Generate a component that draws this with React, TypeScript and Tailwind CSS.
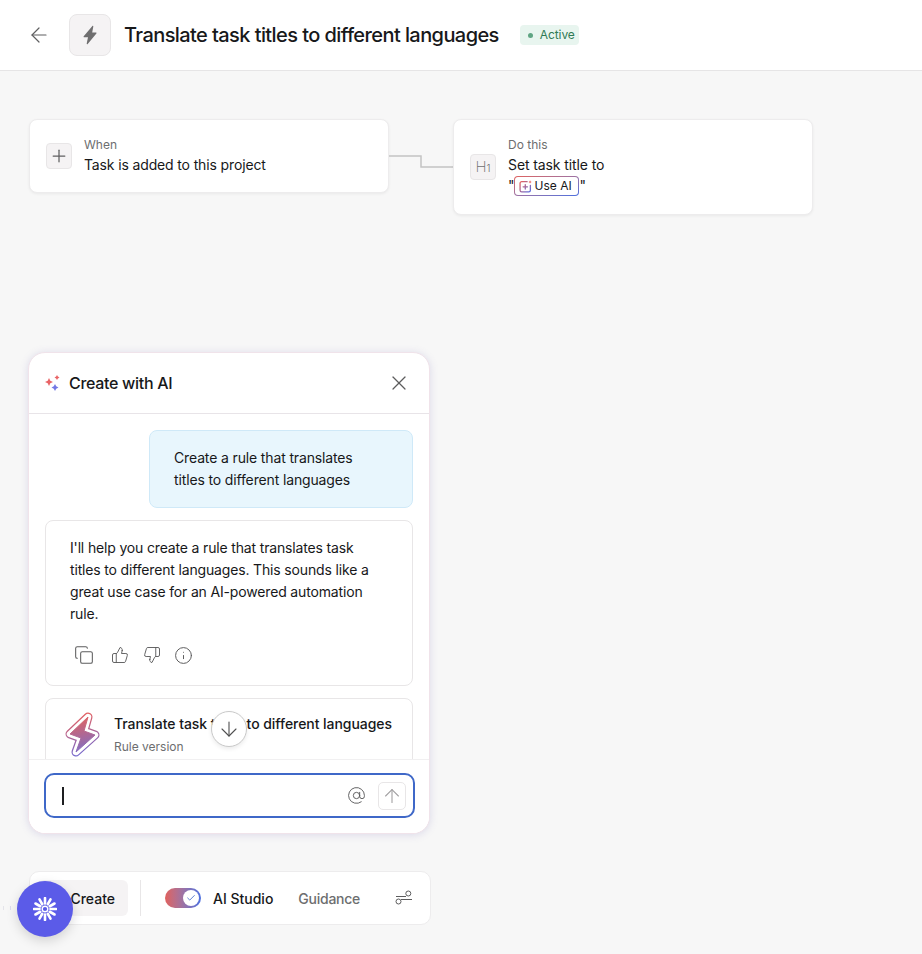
import { ArrowLeft, Plus, X, Copy, ThumbsUp, ThumbsDown, Info, ArrowDown, ArrowUp, AtSign, Check } from "lucide-react";

function Bolt() {
  return (
    <svg width="18" height="20" viewBox="0 0 18 20" fill="#6f6e6f">
      <path d="M11.400 1 2.700 11.200c-.3.5 0 1 .5 1h3.800L5.700 18.400c-.1.7.6 1 1 .5L15.400 8.500c.3-.4 0-1-.5-1H11.200l1.100-6.100c.1-.7-.5-.9-.9-.4Z" />
    </svg>
  );
}

function Sparkles() {
  return (
    <svg width="16" height="16" viewBox="0 0 16 16">
      <path d="M4 3 5.300 5.700 8 7 5.300 8.300 4 11 2.700 8.300 0 7 2.700 5.700Z" fill="#e96466" />
      <path d="M12 0 12.900 1.600 14.500 2.500 12.900 3.400 12 5 11.100 3.400 9.500 2.500 11.100 1.600Z" fill="#e96466" />
      <path d="M10 9 11.200 11.300 13.500 12.500 11.200 13.700 10 16 8.800 13.700 6.500 12.500 8.800 11.300Z" fill="#7478e4" />
    </svg>
  );
}

const boltPath = "M33 17 15 34 26 38 21 52 40 35 29 31Z";

function BigBolt() {
  return (
    <svg width="59" height="65" viewBox="0 0 59 65" className="-mt-[13px] shrink-0">
      <defs>
        <linearGradient id="boltGrad" gradientUnits="userSpaceOnUse" x1="20" y1="13" x2="32" y2="57">
          <stop offset="0" stopColor="#ec5f58" />
          <stop offset="1" stopColor="#6a6ad8" />
        </linearGradient>
        <linearGradient id="boltFill" gradientUnits="userSpaceOnUse" x1="22" y1="17" x2="32" y2="52">
          <stop offset="0" stopColor="#e2625f" />
          <stop offset="1" stopColor="#7d6ec8" />
        </linearGradient>
      </defs>
      <path d={boltPath} fill="none" stroke="url(#boltGrad)" strokeWidth="9" strokeLinejoin="round" />
      <path d={boltPath} fill="none" stroke="#fff" strokeWidth="6.500" strokeLinejoin="round" />
      <path d={boltPath} fill="url(#boltFill)" stroke="url(#boltFill)" strokeWidth="1" strokeLinejoin="round" />
    </svg>
  );
}

function Burst() {
  const rays = [0, 30, 60, 90, 120, 150, 180, 210, 240, 270, 300, 330];
  return (
    <svg width="24" height="24" viewBox="0 0 24 24">
      <circle cx="12" cy="12" r="2.800" fill="none" stroke="#fff" strokeWidth="1.400" />
      {rays.map((r) => (
        <line key={r} x1="12" y1="6.500" x2="12" y2="1" stroke="#fff" strokeWidth="2.600" strokeLinecap="round" transform={`rotate(${r} 12 12)`} />
      ))}
    </svg>
  );
}

function UseAiIcon() {
  return (
    <svg width="13" height="13" viewBox="0 0 12 12" fill="none">
      <defs>
        <linearGradient id="uaGrad" x1="0" y1="0" x2="1" y2="1">
          <stop offset="0" stopColor="#e8605a" />
          <stop offset="1" stopColor="#5a6ee0" />
        </linearGradient>
      </defs>
      <path d="M7.500 1.500H2.500a1.500 1.500 0 0 0-1.500 1.500v6.500A1.500 1.500 0 0 0 2.500 11H9a1.500 1.500 0 0 0 1.500-1.500V5M3.800 6.300h4M5.800 4.300v4" stroke="url(#uaGrad)" strokeWidth="1.200" strokeLinecap="round" />
      <path d="M10.200 0.300 10.700 1.300 11.700 1.800 10.700 2.300 10.200 3.300 9.700 2.300 8.700 1.800 9.700 1.300Z" fill="#e8605a" />
    </svg>
  );
}

export default function App() {
  return (
    <div className="relative min-h-[954px] overflow-hidden bg-[#f7f7f7] font-['Inter',sans-serif] text-[#17181a]">
      <header className="flex h-[71px] items-center border-b border-[#e6e5e6] bg-white pl-[27px]">
        <ArrowLeft size={24} strokeWidth={1.2} className="text-[#5f5f60]" />
        <div className="ml-[18px] flex h-[42px] w-[42px] items-center justify-center rounded-[8px] border border-[#e8e6e7] bg-[#f5f3f4]">
          <Bolt />
        </div>
        <h1 className="ml-[13px] text-[20px] font-medium tracking-[-0.58px]">Translate task titles to different languages</h1>
        <span className="ml-[21px] flex h-[20px] items-center gap-[7px] rounded-[4px] bg-[#e8f5ef] pl-[8px] pr-[4px] text-[12px] tracking-[-0.1px] text-[#2f7a55]">
          <span className="h-[5px] w-[5px] rounded-full bg-[#5fa583]" />
          Active
        </span>
      </header>

      <main className="pl-[29px] pt-[48px]">
        <div className="flex items-start">
          <div className="flex h-[74px] w-[360px] items-center rounded-[8px] border border-[#edeced] bg-white pl-[16px] shadow-[0_1px_3px_rgba(0,0,0,0.06)]">
            <div className="flex h-[26px] w-[26px] items-center justify-center rounded-[4px] border border-[#e8e6e7] bg-[#f5f3f4]">
              <Plus size={20} strokeWidth={1.5} className="text-[#5f5f60]" />
            </div>
            <div className="ml-[12px]">
              <div className="text-[12px] leading-[16px] text-[#6d6e6f]">When</div>
              <div className="mt-[2px] text-[14px] leading-[20px] tracking-[-0.14px]">Task is added to this project</div>
            </div>
          </div>
          <svg width="64" height="60" viewBox="0 0 64 60" fill="none" className="shrink-0">
            <path d="M0 37H32V48H64" stroke="#c4c4c4" strokeWidth="1.500" />
          </svg>
          <div className="flex h-[96px] w-[360px] items-center rounded-[8px] border border-[#edeced] bg-white pl-[16px] shadow-[0_1px_3px_rgba(0,0,0,0.06)]">
            <div className="flex h-[26px] w-[26px] items-center justify-center rounded-[4px] border border-[#e8e6e7] bg-[#f5f3f4] text-[#6d6e6f]">
              <span className="text-[15px] font-extralight">H</span>
              <span className="mt-[3px] text-[10px] font-light">1</span>
            </div>
            <div className="ml-[12px] pb-[1px]">
              <div className="text-[12px] leading-[16px] text-[#6d6e6f]">Do this</div>
              <div className="mt-[2px] text-[14px] leading-[20px] tracking-[-0.1px]">Set task title to</div>
              <div className="mt-[1px] flex items-center text-[14px] leading-[20px]">
                "
                <span className="-ml-[1px] mr-[1px] rounded-[4px] bg-gradient-to-br from-[#e0605c] to-[#4a6fe0] p-[1px]">
                  <span className="flex h-[18px] w-[63px] items-center gap-[3px] rounded-[3px] bg-white pl-[4px] text-[12px]">
                    <UseAiIcon />
                    Use AI
                  </span>
                </span>
                "
              </div>
            </div>
          </div>
        </div>

        <section className="-ml-[1px] mt-[137px] flex h-[482px] w-[402px] flex-col overflow-hidden rounded-[17px] border border-[#f0e3ea] bg-white shadow-[0_1px_8px_rgba(110,100,180,0.2)]">
          <div className="flex h-[61px] shrink-0 items-center justify-between border-b border-[#e8e4e8] pl-[16px] pr-[18px]">
            <div className="flex items-center gap-[8px]">
              <Sparkles />
              <span className="text-[16px] font-medium tracking-[-0.3px]">Create with AI</span>
            </div>
            <X size={24} strokeWidth={1.2} className="text-[#5c5c5d]" />
          </div>
          <div className="relative flex-1 overflow-hidden px-[16px] pt-[16px]">
            <div className="ml-auto h-[78px] w-[264px] rounded-[8px] border border-[#cfe9f8] bg-[#e8f6fd] pl-[24px] pt-[16px] text-[14px] leading-[22px] tracking-[-0.14px]">
              Create a rule that translates<br />titles to different languages
            </div>
            <div className="mt-[12px] h-[166px] w-[368px] rounded-[8px] border border-[#e8e6e7] pl-[24px] pr-[36px] pt-[16px] text-[14px] leading-[22px] tracking-[-0.16px]">
              I'll help you create a rule that translates task titles to different languages. This sounds like a great use case for an AI-powered automation rule.
              <div className="mt-[20px] flex items-center pl-[4px] text-[#5c5c5d]">
                <Copy size={20} strokeWidth={1.25} />
                <ThumbsUp size={18} strokeWidth={1.25} className="ml-[17px]" />
                <ThumbsDown size={18} strokeWidth={1.25} className="ml-[14px]" />
                <Info size={19} strokeWidth={1.25} className="ml-[13px]" />
              </div>
            </div>
            <div className="mt-[12px] flex h-[90px] w-[368px] rounded-[8px] border border-[#e8e6e7] pl-[9px] pt-[14px]">
              <BigBolt />
              <div>
                <div className="text-[14px] font-medium leading-[22px] tracking-[-0.05px]">Translate task titles to different languages</div>
                <div className="mt-[3px] text-[12px] leading-[18px] text-[#6d6e6f]">Rule version</div>
              </div>
            </div>
            <div className="absolute bottom-[12px] left-[182px] flex h-[36px] w-[36px] items-center justify-center rounded-full border border-[#c9c9c9] bg-white text-[#4f4f50] shadow-[0_2px_4px_rgba(0,0,0,0.08)]">
              <ArrowDown size={24} strokeWidth={1.1} />
            </div>
          </div>
          <div className="h-[74px] shrink-0 border-t border-[#f1f0f1] bg-white px-[15px] pt-[13px]">
            <div className="flex h-[45px] w-[371px] items-center rounded-[10px] border-2 border-[#3f68c8] pl-[16px] pr-[7px]">
              <span className="h-[18px] w-[1.500px] bg-[#1e1f21]" />
              <AtSign size={19} strokeWidth={1.2} className="ml-auto text-[#5c5c5d]" />
              <div className="ml-[12px] flex h-[28px] w-[28px] items-center justify-center rounded-[5px] border border-[#e8e6e7] text-[#a2a0a2]">
                <ArrowUp size={22} strokeWidth={1.2} />
              </div>
            </div>
          </div>
        </section>

        <div className="mt-[37px] flex h-[54px] w-[402px] items-center rounded-[10px] border border-[#edeced] bg-white pl-[8px]">
          <div className="flex h-[36px] w-[90px] items-center justify-end rounded-[6px] bg-[#f5f3f4] pr-[13px] text-[14px] font-medium">Create</div>
          <div className="ml-[12px] h-[36px] w-px bg-[#e8e6e7]" />
          <div className="ml-[24px] flex h-[20px] w-[36px] items-center justify-end rounded-full bg-gradient-to-r from-[#e0605c] to-[#4a6fe0] pr-[2px]">
            <span className="flex h-[16px] w-[16px] items-center justify-center rounded-full bg-white">
              <Check size={10} strokeWidth={2} className="text-[#3f68c8]" />
            </span>
          </div>
          <span className="ml-[12px] text-[14px] font-medium">AI Studio</span>
          <span className="ml-[25px] text-[14px] font-medium tracking-[-0.25px] text-[#6d6e6f]">Guidance</span>
          <svg width="18" height="16" viewBox="0 0 18 16" fill="none" stroke="#5c5c5d" strokeWidth="1" className="ml-[35px]">
            <path d="M1 6.500H11M6 9.500H17" />
            <circle cx="13.300" cy="3.500" r="2.500" fill="#fff" />
            <circle cx="3.500" cy="11.500" r="2.500" fill="#fff" />
          </svg>
        </div>
      </main>

      <span className="absolute left-[3px] top-[906px] h-[4px] w-px bg-[#e4e4ea]" />
      <span className="absolute left-[10px] top-[906px] h-[4px] w-px bg-[#dcdcf0]" />
      <div className="absolute left-[17px] top-[881px] flex h-[56px] w-[56px] items-center justify-center rounded-full bg-[#5b5be8] shadow-[0_4px_12px_rgba(0,0,0,0.15)]">
        <Burst />
      </div>
    </div>
  );
}
